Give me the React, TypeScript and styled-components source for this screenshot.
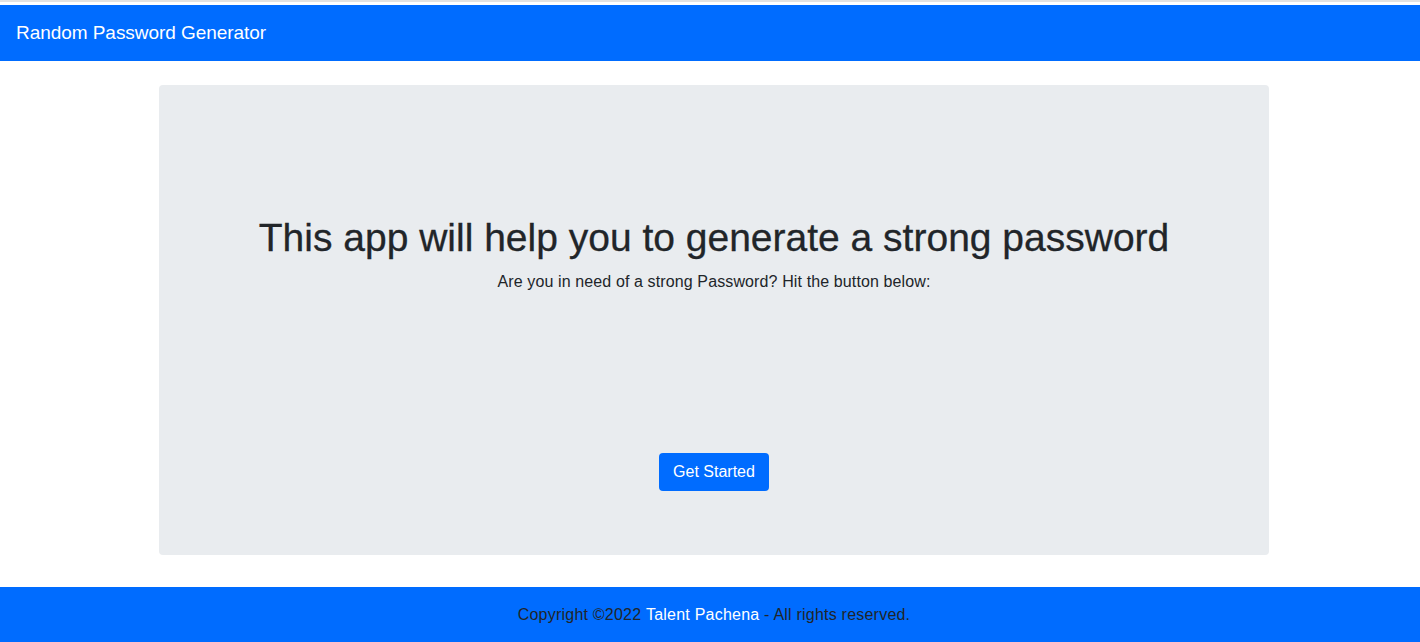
import styled, { createGlobalStyle } from "styled-components";

const BLUE = "#006cff";

const GlobalStyle = createGlobalStyle`
  html, body {
    margin: 0;
    padding: 0;
    background: #fff;
    font-family: "Liberation Sans", Arial, sans-serif;
    color: #212529;
  }
  * { box-sizing: border-box; }
`;

const Page = styled.div`
  display: flex;
  flex-direction: column;
  min-height: 642px;
  border-top: 2px solid #e2e2e2;
  padding-top: 3px;
`;

const NavBar = styled.nav`
  display: flex;
  align-items: center;
  height: 56px;
  padding: 0 16px;
  background: ${BLUE};
`;

const Brand = styled.span`
  color: #fff;
  font-size: 19px;
  letter-spacing: -0.05px;
`;

const Main = styled.main`
  flex: 1;
  display: flex;
  justify-content: center;
  padding: 24px 0 32px 8px;
`;

const Jumbotron = styled.section`
  width: 1110px;
  height: 470px;
  display: flex;
  flex-direction: column;
  align-items: center;
  padding-top: 129px;
  background: #e9ecef;
  border-radius: 4px;
`;

const Title = styled.h1`
  margin: 0;
  font-size: 39px;
  font-weight: 400;
  line-height: 48px;
  color: #212529;
  -webkit-text-stroke: 0.3px #212529;
`;

const Lead = styled.p`
  margin: 8px 0 0;
  font-size: 16px;
  line-height: 24px;
  letter-spacing: 0.12px;
`;

const StartButton = styled.button`
  margin-top: 159px;
  width: 110px;
  height: 38px;
  border: none;
  border-radius: 4px;
  background: ${BLUE};
  color: #fff;
  font-family: inherit;
  font-size: 16px;
  cursor: pointer;
`;

const Footer = styled.footer`
  display: flex;
  justify-content: center;
  align-items: center;
  height: 55px;
  padding-left: 8px;
  background: ${BLUE};
  font-size: 16px;
  letter-spacing: 0.22px;
  color: #212529;
`;

const Author = styled.span`
  color: #fff;
`;

export default function App() {
  return (
    <>
      <GlobalStyle />
      <Page>
        <NavBar>
          <Brand>Random Password Generator</Brand>
        </NavBar>
        <Main>
          <Jumbotron>
            <Title>This app will help you to generate a strong password</Title>
            <Lead>Are you in need of a strong Password? Hit the button below:</Lead>
            <StartButton>Get Started</StartButton>
          </Jumbotron>
        </Main>
        <Footer>
          Copyright ©2022&nbsp;<Author>Talent Pachena</Author>&nbsp;- All rights reserved.
        </Footer>
      </Page>
    </>
  );
}
